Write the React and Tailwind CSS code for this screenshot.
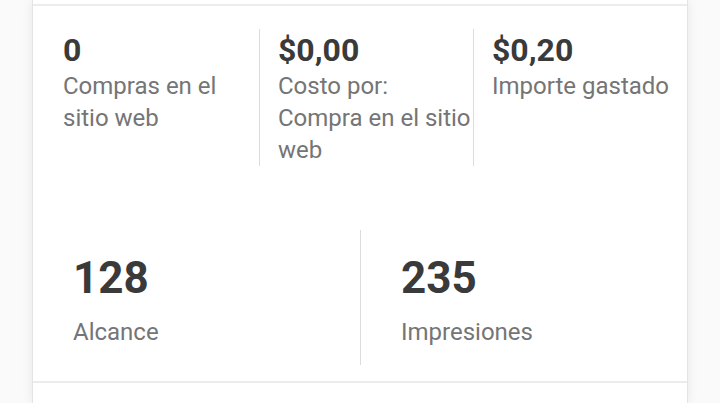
import React from "react";

const topStats = [
  { value: "0", label: "Compras en el sitio web" },
  { value: "$0,00", label: "Costo por: Compra en el sitio web" },
  { value: "$0,20", label: "Importe gastado" },
];

const bottomStats = [
  { value: "128", label: "Alcance" },
  { value: "235", label: "Impresiones" },
];

export default function App() {
  return (
    <div
      className="w-[720px] h-[403px] overflow-hidden bg-[#fafafa] px-[32px]"
      style={{ fontFamily: "Roboto, 'Liberation Sans', sans-serif" }}
    >
      <div className="bg-white h-full border-x border-[#e4e4e4] shadow-[0_0_10px_rgba(0,0,0,0.08)]">
        <div className="h-[4px]" />

        {/* Results summary */}
        <div className="border-t-2 border-[#ececec] pt-[23px]">
          <div className="grid grid-cols-3 pl-[12px]">
            {topStats.map((s, i) => (
              <div
                key={s.label}
                className={`pl-[18px] pt-[3px] ${
                  i > 0 ? "border-l border-[#dcdcdc]" : ""
                }`}
              >
                <div className="text-[32px] leading-[36px] font-bold text-[#3a3a3a]">
                  {s.value}
                </div>
                <div className="mt-[2px] text-[24px] leading-[32px] text-[#757575]">
                  {s.label}
                </div>
              </div>
            ))}
          </div>

          <div className="grid grid-cols-2 mt-[64px]">
            {bottomStats.map((s, i) => (
              <div
                key={s.label}
                className={`pl-[40px] pt-[22px] pb-[17px] ${
                  i > 0 ? "border-l border-[#dcdcdc]" : ""
                }`}
              >
                <div className="text-[44px] leading-[52px] font-bold text-[#3a3a3a]">
                  {s.value}
                </div>
                <div className="mt-[12px] text-[24px] leading-[32px] text-[#757575]">
                  {s.label}
                </div>
              </div>
            ))}
          </div>

          <div className="mt-[16px] border-t-2 border-[#ececec]" />
        </div>
      </div>
    </div>
  );
}
